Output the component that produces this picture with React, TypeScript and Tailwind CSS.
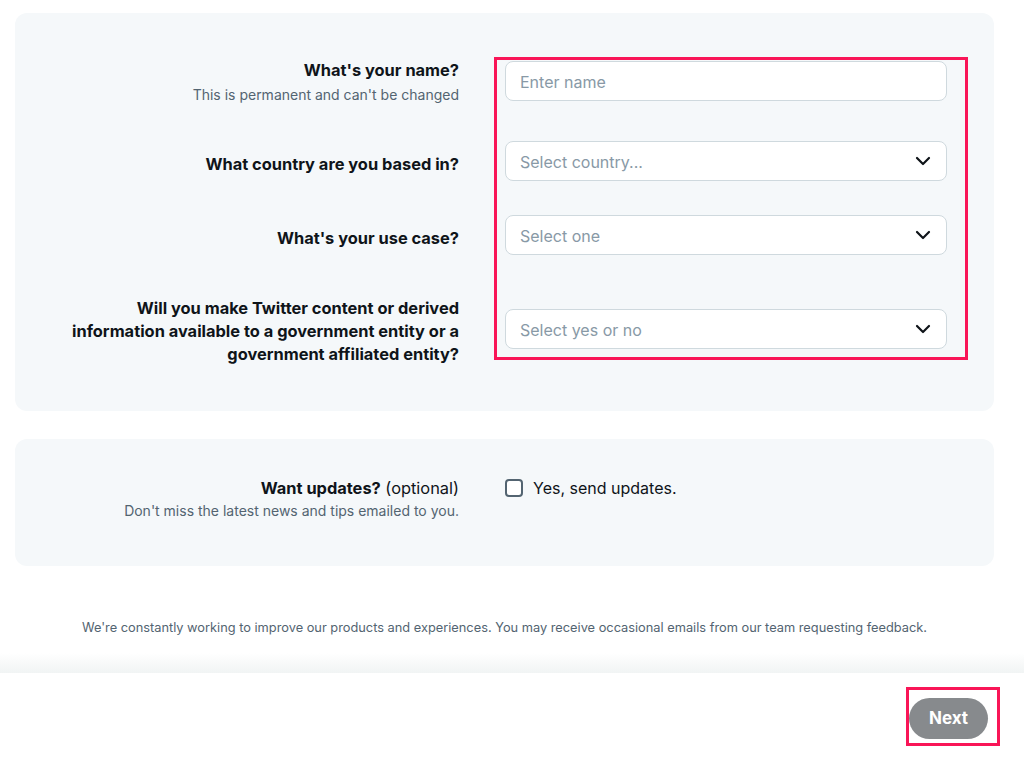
import React from 'react';

const Chevron: React.FC = () => (
    <svg width="24" height="24" viewBox="0 0 24 24" fill="none" className="shrink-0">
        <path d="M6 9l6 6 6-6" stroke="#0f1419" strokeWidth="2.2" strokeLinecap="round" strokeLinejoin="round" />
    </svg>
);

const SelectBox: React.FC<{ placeholder: string }> = ({ placeholder }) => (
    <div className="h-10 w-[442px] rounded-lg border border-[#cfd9de] bg-white flex items-center justify-between pl-[14px] pr-[11px]">
        <span className="text-[16px] leading-6 pt-px text-[#8899a6]">{placeholder}</span>
        <Chevron />
    </div>
);

export default function App() {
    return (
        <div className="min-h-[760px] bg-white text-[#0f1419]" style={{ fontFamily: 'Inter, "Noto Sans", sans-serif' }}>
            <div className="pl-[15px] pr-[30px] pt-[13px]">
                {/* Profile card */}
                <div className="relative rounded-xl bg-[#f5f8fa] pl-8 pr-[47px] pt-[45px] pb-[45px]">
                    {/* name */}
                    <div className="flex items-start gap-[46px]">
                        <div className="w-[412px] text-right">
                            <p className="text-[16.4px] leading-6 font-bold">What's your name?</p>
                            <p className="mt-[3px] text-[14px] leading-5 text-[#536471]">This is permanent and can't be changed</p>
                        </div>
                        <div className="mt-[3px] h-10 w-[442px] rounded-lg border border-[#cfd9de] bg-white flex items-center pl-[14px]">
                            <span className="text-[16px] leading-6 pt-px text-[#8899a6]">Enter name</span>
                        </div>
                    </div>

                    {/* country */}
                    <div className="mt-9 flex items-center gap-[46px]">
                        <p className="w-[412px] pt-[6px] text-right text-[16.4px] leading-6 font-bold">What country are you based in?</p>
                        <SelectBox placeholder="Select country..." />
                    </div>

                    {/* use case */}
                    <div className="mt-[34px] flex items-center gap-[46px]">
                        <p className="w-[412px] pt-[6px] text-right text-[16.4px] leading-6 font-bold">What's your use case?</p>
                        <SelectBox placeholder="Select one" />
                    </div>

                    {/* government */}
                    <div className="mt-[37px] flex items-center gap-[46px]">
                        <p className="w-[412px] pt-[5px] text-right text-[16.4px] leading-[23px] font-bold">
                            Will you make Twitter content or derived
                            <br />
                            information available to a government entity or a
                            <br />
                            government affiliated entity?
                        </p>
                        <SelectBox placeholder="Select yes or no" />
                    </div>

                    {/* annotation */}
                    <div className="absolute left-[479px] top-[44px] h-[303px] w-[474px] border-[3px] border-[#f91557] pointer-events-none" />
                </div>

                {/* Updates card */}
                <div className="mt-7 rounded-xl bg-[#f5f8fa] pl-8 pr-[47px] pt-[37px] pb-[45px]">
                    <div className="flex items-start gap-[46px]">
                        <div className="w-[412px] text-right">
                            <p className="text-[16.4px] leading-6">
                                <span className="font-bold">Want updates?</span> (optional)
                            </p>
                            <p className="mt-px text-[14px] leading-5 text-[#536471]">Don't miss the latest news and tips emailed to you.</p>
                        </div>
                        <label className="flex h-6 items-center gap-[10px]">
                            <span className="h-[18px] w-[18px] rounded-[4px] border-2 border-[#536471] bg-white" />
                            <span className="text-[16px]">Yes, send updates.</span>
                        </label>
                    </div>
                </div>

                <p className="mt-[52px] text-center text-[12.8px] leading-5 text-[#536471]">
                    We're constantly working to improve our products and experiences. You may receive occasional emails from our team requesting feedback.
                </p>
            </div>

            {/* footer */}
            <div className="mt-[15px] h-5 bg-gradient-to-b from-white to-[#f1f4f4]" />
            <div className="relative flex h-[87px] justify-end bg-white pr-9 pt-[25px]">
                <button className="h-[41px] w-[79px] rounded-full bg-[#878a8d] text-[17px] font-bold text-white">Next</button>
                <div className="absolute left-[906px] top-[14px] h-[59px] w-[94px] border-[3px] border-[#f91557] pointer-events-none" />
            </div>
        </div>
    );
}
